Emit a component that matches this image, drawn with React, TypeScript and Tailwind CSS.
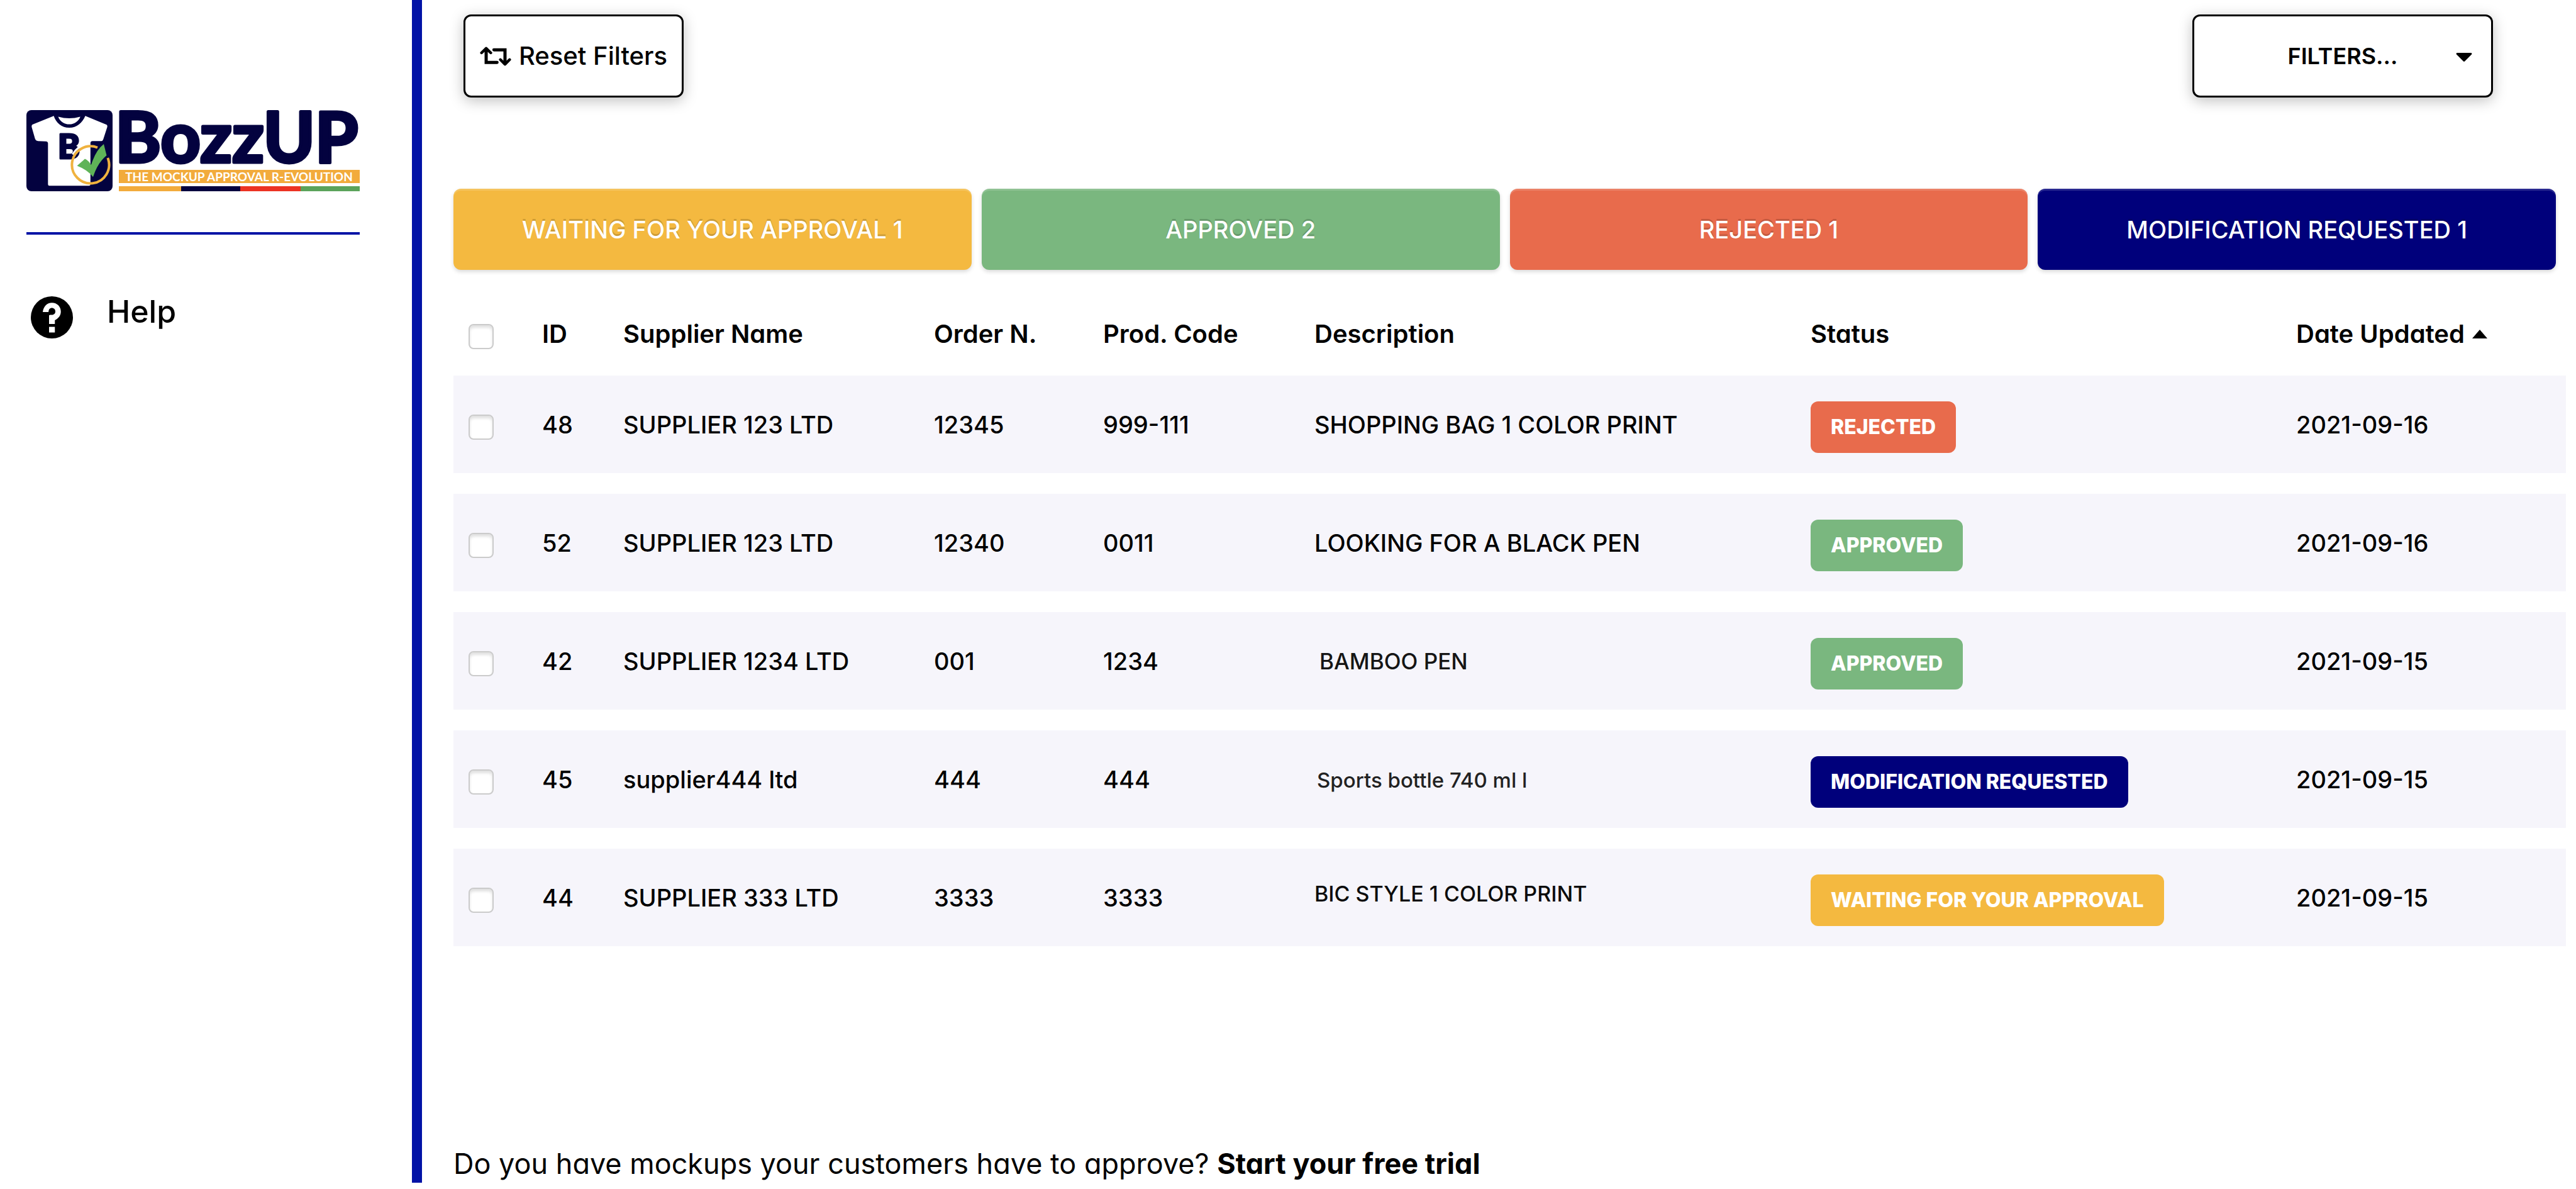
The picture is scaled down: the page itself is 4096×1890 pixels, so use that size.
import React from "react";

type Status = "waiting" | "approved" | "rejected" | "modification";

const STATUS: Record<Status, { label: string; count: number; color: string }> = {
  waiting: { label: "WAITING FOR YOUR APPROVAL", count: 1, color: "bg-[#f4b940]" },
  approved: { label: "APPROVED", count: 2, color: "bg-[#7ab77f]" },
  rejected: { label: "REJECTED", count: 1, color: "bg-[#e86b4c]" },
  modification: { label: "MODIFICATION REQUESTED", count: 1, color: "bg-[#00007b]" },
};

const TABS: Status[] = ["waiting", "approved", "rejected", "modification"];

interface Row {
  id: string;
  supplier: string;
  order: string;
  code: string;
  description: React.ReactNode;
  status: Status;
  date: string;
}

const ROWS: Row[] = [
  { id: "48", supplier: "SUPPLIER 123 LTD", order: "12345", code: "999-111", description: "SHOPPING BAG 1 COLOR PRINT", status: "rejected", date: "2021-09-16" },
  { id: "52", supplier: "SUPPLIER 123 LTD", order: "12340", code: "0011", description: "LOOKING FOR A BLACK PEN", status: "approved", date: "2021-09-16" },
  {
    id: "42", supplier: "SUPPLIER 1234 LTD", order: "001", code: "1234",
    description: <span className="pl-2 text-[35px] text-[#151515]">BAMBOO PEN</span>,
    status: "approved", date: "2021-09-15",
  },
  {
    id: "45", supplier: "supplier444 ltd", order: "444", code: "444",
    description: <span className="pl-1 text-[33px] text-[#222222]">Sports bottle 740 ml l</span>,
    status: "modification", date: "2021-09-15",
  },
  {
    id: "44", supplier: "SUPPLIER 333 LTD", order: "3333", code: "3333",
    description: <span className="block pb-3 text-[34px] text-[#0c0c0c]">BIC STYLE 1 COLOR PRINT</span>,
    status: "waiting", date: "2021-09-15",
  },
];

function Logo() {
  return (
    <svg viewBox="0 0 530 129" className="w-full overflow-visible" role="img" aria-label="BozzUP">
      <rect width="137" height="129" rx="8" fill="#03023f" />
      <path
        d="M43.5 9.2 L9.5 23 Q8 24 8.4 27 L13.7 45.6 Q15 49 18.5 49.3 L31 49.7 Q34.3 50 34.3 53 V118 Q34.3 120.3 36.6 120.3 H99.5 Q101.8 120.3 101.8 118 V52.5 Q102 49.3 105 49.3 H119 Q121.3 49.3 122.2 46.5 L128.5 27 Q129 24 127.5 23.3 L93.6 9.2 C89 20 80 28 68.2 28 C56 28 47 20 43.5 9.2 Z"
        fill="#fff"
      />
      <path d="M50.6 10.5 Q68 15.5 85.7 10.5 C83 18 76 22.6 68.2 22.6 C60 22.6 53 18 50.6 10.5 Z" fill="#fff" />
      <text x="50" y="77" fontFamily="Lato, sans-serif" fontWeight="900" fontSize="53" fill="#03023f" stroke="#03023f" strokeWidth="3" strokeLinejoin="round">
        B
      </text>
      <path d="M73.4 70.5 A33 33 0 0 1 96.3 54.5" fill="none" stroke="#fff" strokeWidth="3" />
      <path d="M129.3 76 A29.5 29.5 0 1 1 113 59.6" fill="none" stroke="#f0b23e" strokeWidth="4" />
      <path d="M80.5 88.6 L93 77.6 Q99 80 103 87 Q110 64 123 54 L127.5 72 Q113 84 106 106.3 Q97 95 80.5 88.6 Z" fill="#5fb358" />
      <text x="141" y="83" fontFamily="Lato, sans-serif" fontWeight="700" fontSize="111" fill="#03023f" stroke="#03023f" strokeWidth="5" strokeLinejoin="round">
        BozzUP
      </text>
      <rect x="147" y="95" width="383" height="21" fill="#f2ab3c" />
      <text x="338" y="113" textAnchor="middle" fontFamily="Lato, sans-serif" fontWeight="700" fontSize="19" fill="#fff">
        THE MOCKUP APPROVAL R-EVOLUTION
      </text>
      <rect x="147" y="121" width="99" height="8" fill="#f2ab3c" />
      <rect x="246" y="121" width="94" height="8" fill="#03023f" />
      <rect x="340" y="121" width="96" height="8" fill="#ec3323" />
      <rect x="436" y="121" width="94" height="8" fill="#5ba35b" />
    </svg>
  );
}

function HelpIcon() {
  return (
    <svg viewBox="0 0 254 254" className="size-[67px] shrink-0" aria-hidden="true">
      <circle cx="127" cy="127" r="127" fill="#000" />
      <path
        d="M72 95 C76 61 98 39 127 39 C159 39 181 63 181 92 C181 119 164 134 145 144 V167 H110 V115 C116 112 118 112 127 112 C140 112 148 103 148 91 C148 79 139 70 127 70 C115 70 107 78 107 95 Z"
        fill="#fff"
      />
      <rect x="110" y="184" width="35" height="34" fill="#fff" />
    </svg>
  );
}

function ResetIcon() {
  return (
    <svg viewBox="0 0 188 118" className="h-[31px] w-[50px] shrink-0" fill="none" stroke="currentColor" strokeLinecap="round" aria-hidden="true">
      <g strokeWidth="19">
        <path d="M37 24 V96 H103" />
        <path d="M84 20 H151 V96" />
      </g>
      <g strokeWidth="17" strokeLinejoin="round">
        <path d="M9 38 L37 11 L65 38" />
        <path d="M123 79 L151 107 L179 79" />
      </g>
      <path d="M37 11 L56 32 H18 Z M151 107 L132 86 H170 Z" fill="currentColor" stroke="none" />
    </svg>
  );
}

function Checkbox({ label }: { label: string }) {
  return (
    <input
      type="checkbox"
      aria-label={label}
      className="block size-10 appearance-none rounded-lg border-2 border-[#cbcbcb] bg-white shadow-[inset_0_4px_4px_rgba(0,0,0,0.12)] checked:bg-[#00007b]"
    />
  );
}

const HEADERS = ["ID", "Supplier Name", "Order N.", "Prod. Code", "Description", "Status"];

export default function App() {
  return (
    <div className="flex min-h-screen items-start bg-white font-[Inter,sans-serif] text-[38px] leading-[48px] text-black [font-feature-settings:'cv11']">
      <aside className="h-[calc(100vh-10px)] w-[671px] shrink-0 border-r-[16px] border-[#0213a6] pt-[175px] pr-[83px] pl-[42px]">
        <Logo />
        <hr className="mt-[65px] border-t-4 border-[#0213a6]" />
        <nav className="mt-[98px] pl-[7px]">
          <a href="#help" className="flex items-start gap-[54px] text-[50px] font-medium">
            <HelpIcon />
            Help
          </a>
        </nav>
      </aside>

      <main className="flex min-h-screen min-w-0 flex-1 flex-col pr-4 pl-[50px]">
        <div className="flex justify-between pt-[23px] pr-[116px] pl-4">
          <button type="button" className="flex h-[132px] w-[350px] items-center justify-center gap-3 rounded-xl border-[3px] border-black text-[40px] font-medium whitespace-nowrap shadow-[0_5px_22px_rgba(0,0,0,0.25)]">
            <ResetIcon />
            Reset Filters
          </button>
          <div className="relative">
            <select aria-label="Filters" className="h-[132px] w-[478px] appearance-none rounded-xl border-[3px] border-black bg-white text-center text-[36px] font-semibold shadow-[0_5px_22px_rgba(0,0,0,0.25)] [text-align-last:center]">
              <option>FILTERS...</option>
            </select>
            <svg viewBox="0 0 26 14" className="pointer-events-none absolute top-[61px] right-[33px] h-3.5 w-[26px]" aria-hidden="true">
              <path d="M1.5 0 H24.5 Q26 1 25 2.500 L14 13.500 Q13 14.300 12 13.500 L1 2.500 Q0 1 1.500 0 Z" />
            </svg>
          </div>
        </div>

        <div className="mt-[145px] mr-4 grid grid-cols-4 gap-4">
          {TABS.map((key) => (
            <button
              key={key}
              type="button"
              className={`h-[129px] rounded-xl font-medium text-white shadow-[inset_0_3px_0_rgba(255,255,255,0.16),0_3px_6px_rgba(0,0,0,0.15)] [text-shadow:0_-3px_0_rgba(0,0,0,0.16)] ${STATUS[key].color}`}
            >
              {STATUS[key].label} {STATUS[key].count}
            </button>
          ))}
        </div>

        <table className="w-full table-fixed border-separate border-spacing-x-0 border-spacing-y-[33px] text-left font-medium">
          <colgroup>
            <col className="w-[141px]" />
            <col className="w-[129px]" />
            <col className="w-[494px]" />
            <col className="w-[269px]" />
            <col className="w-[336px]" />
            <col className="w-[789px]" />
            <col className="w-[772px]" />
            <col className="w-[429px]" />
          </colgroup>
          <thead className="text-[40px]">
            <tr className="h-[102px]">
              <th className="pt-11 pl-6">
                <Checkbox label="Select all" />
              </th>
              {HEADERS.map((h) => (
                <th key={h} className="pt-9 font-semibold">
                  {h}
                </th>
              ))}
              <th className="pt-9 font-semibold" aria-sort="ascending">
                <button type="button" className="flex items-center gap-3">
                  Date Updated
                  <svg viewBox="0 0 24 14" className="h-3.5 w-6" aria-hidden="true">
                    <path d="M12 0 L24 14 H0 Z" />
                  </svg>
                </button>
              </th>
            </tr>
          </thead>
          <tbody>
            {ROWS.map((r) => (
              <tr key={r.id} className="h-[155px] bg-[#f6f5fb]">
                <td className="pt-2 pl-6">
                  <Checkbox label={`Select ${r.id}`} />
                </td>
                <td>{r.id}</td>
                <td>{r.supplier}</td>
                <td>{r.order}</td>
                <td>{r.code}</td>
                <td>{r.description}</td>
                <td className="pt-2">
                  <span className={`flex h-[82px] w-fit items-center rounded-xl px-8 text-[32px] font-extrabold text-white ${STATUS[r.status].color}`}>
                    {STATUS[r.status].label}
                  </span>
                </td>
                <td>{r.date}</td>
              </tr>
            ))}
          </tbody>
        </table>

        <p className="mt-auto pb-3 text-[45px] leading-[56px]">
          Do you have mockups your customers have to approve?{" "}
          <a href="#trial" className="font-bold">
            Start your free trial
          </a>
        </p>
      </main>
    </div>
  );
}
